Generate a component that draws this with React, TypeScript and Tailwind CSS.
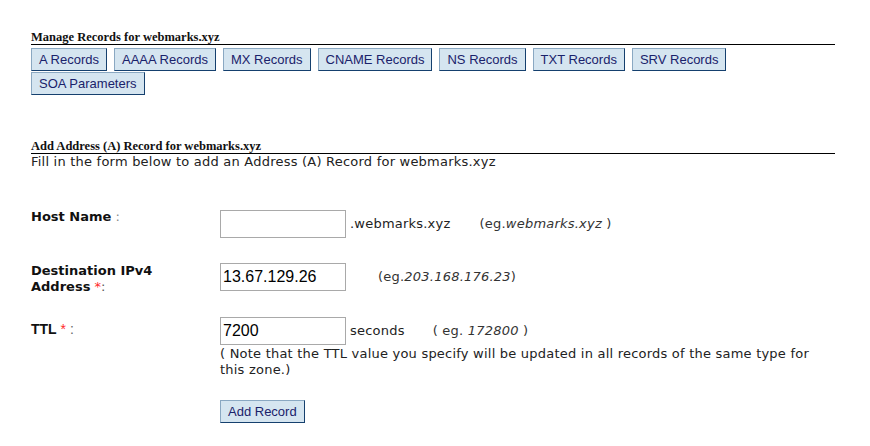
import React from "react";

const btn =
  "h-[23px] px-[7px] bg-[#d5e5f0] border border-t-[#8aa8c2] border-l-[#8aa8c2] border-r-[#15406e] border-b-[#15406e] text-[#1a226b] font-['Liberation_Sans',Arial,sans-serif] text-[13px] leading-[21px] whitespace-nowrap";

const verd = "font-['DejaVu_Sans',Verdana,sans-serif] text-[13px] tracking-[0.22px]";

const heading =
  "h-[15px] leading-[14px] border-b border-black font-['Liberation_Serif','Times_New_Roman',serif] font-bold text-[12.5px] text-[#111]";

const inputCls =
  "w-[126px] h-[28px] border border-[#a9a9a9] bg-white px-[2px] font-['Liberation_Sans',Arial,sans-serif] text-[16px] text-black outline-none";

export default function App() {
  const tabs = [
    "A Records",
    "AAAA Records",
    "MX Records",
    "CNAME Records",
    "NS Records",
    "TXT Records",
    "SRV Records",
    "SOA Parameters",
  ];
  return (
    <div className="w-[870px] h-[446px] bg-white overflow-hidden text-[#222]">
      <div className="ml-[31px] w-[804px] pt-[30px]">
        <div className={heading}>Manage Records for webmarks.xyz</div>
        <div className="mt-[3px] flex flex-wrap gap-x-[7px] gap-y-[1px]">
          {tabs.map((t) => (
            <button key={t} className={btn}>
              {t}
            </button>
          ))}
        </div>

        <div className={"mt-[44px] " + heading}>Add Address (A) Record for webmarks.xyz</div>
        <div className={verd + " leading-[16px]"}>
          Fill in the form below to add an Address (A) Record for webmarks.xyz
        </div>

        {/* Host Name */}
        <div className="mt-[40px] flex h-[53px]">
          <div className={"w-[189px] pr-[30px] leading-[14px] " + verd + " tracking-normal"}>
            <span className="font-bold text-[#111]">Host Name</span>
            <span className="text-[#888]"> :</span>
          </div>
          <div className="flex items-start">
            <div className="flex items-center h-[28px]">
              <input className={inputCls} defaultValue="" />
              <span className={verd + " ml-[4px] text-[#222]"}>.webmarks.xyz</span>
              <span className={verd + " ml-[29px] text-[#333]"}>
                (eg.<i>webmarks.xyz</i> )
              </span>
            </div>
          </div>
        </div>

        {/* Destination */}
        <div className="flex h-[54px]">
          <div className={"w-[189px] pr-[30px] leading-[16px] " + verd + " tracking-normal"}>
            <span className="font-bold text-[#111]">Destination IPv4 Address</span>
            <span className="text-[#ff2a2a]"> *</span>
            <span className="text-[#555]">:</span>
          </div>
          <div className="flex items-center h-[28px]">
            <input className={inputCls} defaultValue="13.67.129.26" />
            <span className={verd + " ml-[32px] text-[#333]"}>
              (eg.<i>203.168.176.23</i>)
            </span>
          </div>
        </div>

        {/* TTL */}
        <div className="flex">
          <div className="w-[189px] pt-[4px] leading-[16px] font-['Liberation_Sans',Arial,sans-serif] text-[14px]">
            <span className="font-bold text-[#111]">TTL</span>
            <span className="text-[#ff2a2a]"> *</span>
            <span className="text-[#666]"> :</span>
          </div>
          <div className="flex flex-col items-start">
            <div className="flex items-center h-[28px]">
              <input className={inputCls} defaultValue="7200" />
              <span className={verd + " ml-[4px] text-[#222]"}>seconds</span>
              <span className={verd + " ml-[28px] text-[#333]"}>
                ( eg. <i>172800</i> )
              </span>
            </div>
            <div className={verd + " mt-[1px] leading-[16px] max-w-[600px] text-[#222]"}>
              ( Note that the TTL value you specify will be updated in all records of the same type for this zone.)
            </div>
            <button className={btn + " mt-[22px]"}>Add Record</button>
          </div>
        </div>
      </div>
    </div>
  );
}
